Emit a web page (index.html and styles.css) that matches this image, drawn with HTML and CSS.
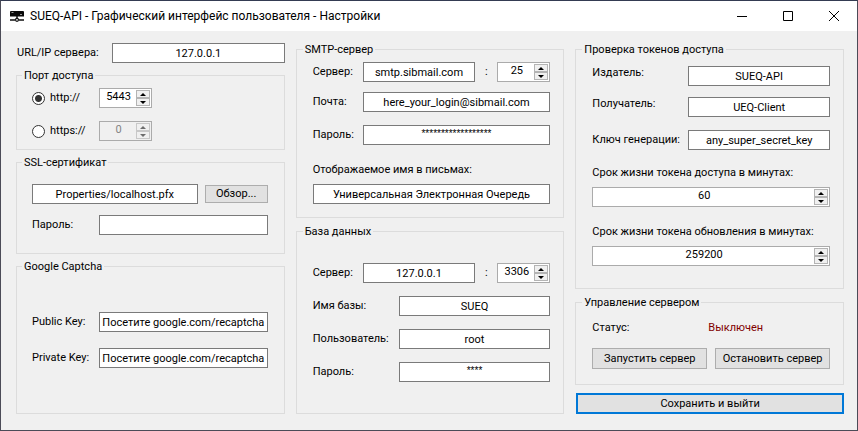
FILE: index.html
```html
<!DOCTYPE html>
<html lang="ru">
<head>
<meta charset="utf-8">
<title>SUEQ-API - Графический интерфейс пользователя - Настройки</title>
<link rel="stylesheet" href="styles.css">
</head>
<body>
<div class="window">
  <header class="titlebar">
    <svg class="app-icon" viewBox="0 0 14 11" width="14" height="11" aria-hidden="true">
      <path d="M1 0h12a1 1 0 0 1 1 1v4.500H0V1a1 1 0 0 1 1-1z" fill="#0a0a0a"/>
      <path d="M1.500 1.500h2M10 3.500h2" stroke="#999" stroke-width="1"/>
      <path d="M7 5v2M0 9h5M9 9h5" stroke="#111" stroke-width="1.500"/>
      <circle cx="7" cy="8.800" r="1.500" fill="#fff" stroke="#111" stroke-width="1.200"/>
    </svg>
    <h1 class="title">SUEQ-API - Графический интерфейс пользователя - Настройки</h1>
    <div class="window-buttons">
      <button type="button" aria-label="Свернуть"><svg viewBox="0 0 10 10" width="10" height="10"><path d="M0 5.500h10" stroke="#000"/></svg></button>
      <button type="button" aria-label="Развернуть"><svg viewBox="0 0 10 10" width="10" height="10"><path d="M.5 .5h9v9h-9z" fill="none" stroke="#000"/></svg></button>
      <button type="button" aria-label="Закрыть"><svg viewBox="0 0 10 10" width="10" height="10"><path d="M0 0l10 10M10 0L0 10" stroke="#000"/></svg></button>
    </div>
  </header>

  <form class="columns">
    <div class="column left">
      <div class="row url-row">
        <label for="url">URL/IP сервера:</label>
        <input class="field" id="url" type="text" value="127.0.0.1">
      </div>

      <fieldset class="ports">
        <legend>Порт доступа</legend>
        <div class="row">
          <label class="radio"><input type="radio" name="scheme" checked>http://</label>
          <div class="spinner">
            <input type="text" inputmode="numeric" aria-label="Порт http" value="5443">
            <div class="arrows"><button type="button" class="up" aria-label="Больше"></button><button type="button" class="down" aria-label="Меньше"></button></div>
          </div>
        </div>
        <div class="row gap-m">
          <label class="radio"><input type="radio" name="scheme">https://</label>
          <div class="spinner disabled">
            <input type="text" inputmode="numeric" aria-label="Порт https" value="0" disabled>
            <div class="arrows"><button type="button" class="up" aria-label="Больше" disabled></button><button type="button" class="down" aria-label="Меньше" disabled></button></div>
          </div>
        </div>
      </fieldset>

      <fieldset class="ssl">
        <legend>SSL-сертификат</legend>
        <div class="row browse">
          <input class="field" type="text" aria-label="Файл сертификата" value="Properties/localhost.pfx">
          <button type="button" class="button small">Обзор...</button>
        </div>
        <div class="row gap-s">
          <label for="ssl-pass">Пароль:</label>
          <input class="field" id="ssl-pass" type="password">
        </div>
      </fieldset>

      <fieldset class="captcha">
        <legend>Google Captcha</legend>
        <div class="row">
          <label for="pub">Public Key:</label>
          <input class="field" id="pub" type="text" value="Посетите google.com/recaptcha">
        </div>
        <div class="row gap-l">
          <label for="priv">Private Key:</label>
          <input class="field" id="priv" type="text" value="Посетите google.com/recaptcha">
        </div>
      </fieldset>
    </div>

    <div class="column middle">
      <fieldset class="smtp">
        <legend>SMTP-сервер</legend>
        <div class="row">
          <label for="smtp">Сервер:</label>
          <input class="field" id="smtp" type="text" value="smtp.sibmail.com">
          <span class="colon">:</span>
          <div class="spinner">
            <input type="text" inputmode="numeric" aria-label="Порт SMTP" value="25">
            <div class="arrows"><button type="button" class="up" aria-label="Больше"></button><button type="button" class="down" aria-label="Меньше"></button></div>
          </div>
        </div>
        <div class="row gap-xs">
          <label for="mail">Почта:</label>
          <input class="field" id="mail" type="text" value="here_your_login@sibmail.com">
        </div>
        <div class="row gap-m">
          <label for="mail-pass">Пароль:</label>
          <input class="field masked" id="mail-pass" type="text" value="******************">
        </div>
        <label class="caption gap-xl" for="sender">Отображаемое имя в письмах:</label>
        <input class="field wide" id="sender" type="text" value="Универсальная Электронная Очередь">
      </fieldset>

      <fieldset class="database">
        <legend>База данных</legend>
        <div class="row host">
          <label for="db">Сервер:</label>
          <input class="field" id="db" type="text" value="127.0.0.1">
          <span class="colon">:</span>
          <div class="spinner">
            <input type="text" inputmode="numeric" aria-label="Порт базы данных" value="3306">
            <div class="arrows"><button type="button" class="up" aria-label="Больше"></button><button type="button" class="down" aria-label="Меньше"></button></div>
          </div>
        </div>
        <div class="row gap-m">
          <label for="db-name">Имя базы:</label>
          <input class="field" id="db-name" type="text" value="SUEQ">
        </div>
        <div class="row gap-m">
          <label for="db-user">Пользователь:</label>
          <input class="field" id="db-user" type="text" value="root">
        </div>
        <div class="row gap-m">
          <label for="db-pass">Пароль:</label>
          <input class="field masked" id="db-pass" type="text" value="****">
        </div>
      </fieldset>
    </div>

    <div class="column right">
      <fieldset class="tokens">
        <legend>Проверка токенов доступа</legend>
        <div class="row top">
          <label for="issuer">Издатель:</label>
          <input class="field" id="issuer" type="text" value="SUEQ-API">
        </div>
        <div class="row top gap-s">
          <label for="audience">Получатель:</label>
          <input class="field" id="audience" type="text" value="UEQ-Client">
        </div>
        <div class="row gap-m">
          <label for="secret">Ключ генерации:</label>
          <input class="field" id="secret" type="text" value="any_super_secret_key">
        </div>
        <label class="caption gap-l" for="access">Срок жизни токена доступа в минутах:</label>
        <div class="spinner wide">
          <input id="access" type="text" inputmode="numeric" value="60">
          <div class="arrows"><button type="button" class="up" aria-label="Больше"></button><button type="button" class="down" aria-label="Меньше"></button></div>
        </div>
        <label class="caption gap-xl" for="refresh">Срок жизни токена обновления в минутах:</label>
        <div class="spinner wide">
          <input id="refresh" type="text" inputmode="numeric" value="259200">
          <div class="arrows"><button type="button" class="up" aria-label="Больше"></button><button type="button" class="down" aria-label="Меньше"></button></div>
        </div>
      </fieldset>

      <fieldset class="control">
        <legend>Управление сервером</legend>
        <div class="status"><span>Статус:</span><output class="off">Выключен</output></div>
        <div class="actions">
          <button type="button" class="button">Запустить сервер</button>
          <button type="button" class="button">Остановить сервер</button>
        </div>
      </fieldset>

      <button type="submit" class="button save">Сохранить и выйти</button>
    </div>
  </form>
</div>
</body>
</html>
```
FILE: styles.css
```css
* { box-sizing: border-box; }

body {
  margin: 0;
  background: #f0f0f0;
  color: #000;
  font: 11px/14px Roboto, "Liberation Sans", sans-serif;
}

input, button { font: inherit; color: inherit; margin: 0; }

.window {
  min-height: 100vh;
  display: flex;
  flex-direction: column;
  border: 1px solid #4b4b57;
  border-top-color: #343b52;
}

/* Title bar */
.titlebar {
  display: flex;
  align-items: center;
  height: 30px;
  padding-left: 9px;
  background: #fff;
}
.app-icon { flex: none; margin-right: 6px; }
.title {
  flex: 1;
  margin: 0;
  font: 12px/16px Roboto, "Noto Sans", sans-serif;
  white-space: nowrap;
}
.window-buttons { display: flex; }
.window-buttons button {
  display: grid;
  place-items: center;
  width: 46px;
  height: 28px;
  padding: 0;
  border: 0;
  background: none;
}

/* Columns */
.columns {
  flex: 1;
  display: grid;
  grid-template-columns: repeat(3, minmax(0, 1fr));
  gap: 11px;
  padding: 11px 13px 16px 15px;
}
.column { display: flex; flex-direction: column; gap: 6px; }

fieldset {
  min-width: 0;
  margin: 0;
  padding: 5px 13px 13px 16px;
  border: 1px solid #dcdcdc;
}
legend {
  margin-left: -10px;
  padding: 0 2px;
  line-height: 15px;
}
.captcha, .database { flex: 1; }

/* Rows */
.row { display: flex; align-items: center; }
.row > label { flex: none; white-space: nowrap; }
.row.top { align-items: flex-start; }
.gap-xs { margin-top: 10px; }
.gap-s { margin-top: 11px; }
.gap-m { margin-top: 13px; }
.gap-l { margin-top: 16px; }
.gap-xl { margin-top: 18px; }
.caption { display: block; white-space: nowrap; }
.wide { width: 100%; margin-top: 7px; }

.column.left { gap: 5px; padding-top: 1px; }
.left fieldset { padding-left: 15px; padding-right: 16px; }
.left .row > label { width: 67px; }
.left .url-row { padding-left: 1px; }
.left .url-row > label { width: 95px; }
.left .ports { padding-bottom: 8px; }
.left .ssl { padding-top: 14px; padding-bottom: 18px; }
.left .captcha { padding-top: 38px; }
.browse { gap: 7px; }

.middle .row > label { width: 50px; }
.middle .database { padding-top: 24px; }
.middle .database .row > label { width: 86px; }
.middle .database .host > label { width: 50px; }
.colon { width: 22px; text-align: center; }

.right .tokens { padding-top: 9px; padding-bottom: 22px; }
.right .row > label { width: 96px; }
.right .control { padding-top: 11px; padding-bottom: 15px; }

/* Controls */
.field {
  flex: 1;
  min-width: 0;
  height: 20px;
  padding: 0 2px;
  border: 1px solid #7a7a7a;
  border-radius: 0;
  background: #fff;
  text-align: center;
}
.masked { padding-bottom: 4px; font: 10px/14px "Liberation Sans", sans-serif; }

.spinner {
  display: flex;
  width: 53px;
  height: 20px;
  padding: 1px;
  border: 1px solid #ababab;
  background: #fff;
}
.spinner.wide { width: 100%; }
.spinner input {
  flex: 1;
  min-width: 0;
  padding: 0 0 2px;
  border: 0;
  background: none;
  text-align: center;
}
.arrows { display: flex; flex-direction: column; width: 14px; }
.arrows button {
  flex: 1;
  display: grid;
  place-items: center;
  padding: 0;
  border: 1px solid #b4b4b4;
  background: #f0f0f0;
}
.arrows button::before {
  content: "";
  border: 3px solid transparent;
}
.arrows .up::before { border-top: 0; border-bottom-color: #000; }
.arrows .down::before { border-bottom: 0; border-top-color: #000; }
.spinner.disabled { border-color: #ababab; }
.disabled, .disabled .arrows button { background: #f0f0f0; color: #838383; border-color: #c8c8c8; }
.disabled .arrows .up::before { border-bottom-color: #6d6d6d; }
.disabled .arrows .down::before { border-top-color: #6d6d6d; }

.radio { display: flex; align-items: center; gap: 5px; }
.radio input {
  appearance: none;
  width: 13px;
  height: 13px;
  border: 1px solid #333;
  border-radius: 50%;
  background: #fff;
}
.radio input:checked { background: radial-gradient(circle, #333 3px, #fff 4px); }

.button {
  height: 21px;
  padding: 0 4px;
  border: 1px solid #adadad;
  border-radius: 0;
  background: #e1e1e1;
  white-space: nowrap;
}
.button.small { width: 63px; height: 18px; }
.actions { display: flex; gap: 8px; margin-top: 13px; }
.actions .button { flex: 1; min-width: 0; padding: 0; }
.button.save { margin-top: 2px; margin-left: 1px; border: 2px solid #0078d7; }

.status { display: flex; }
.status span { flex: none; width: 116px; }
.status .off { flex: 1; color: #800000; }
```
